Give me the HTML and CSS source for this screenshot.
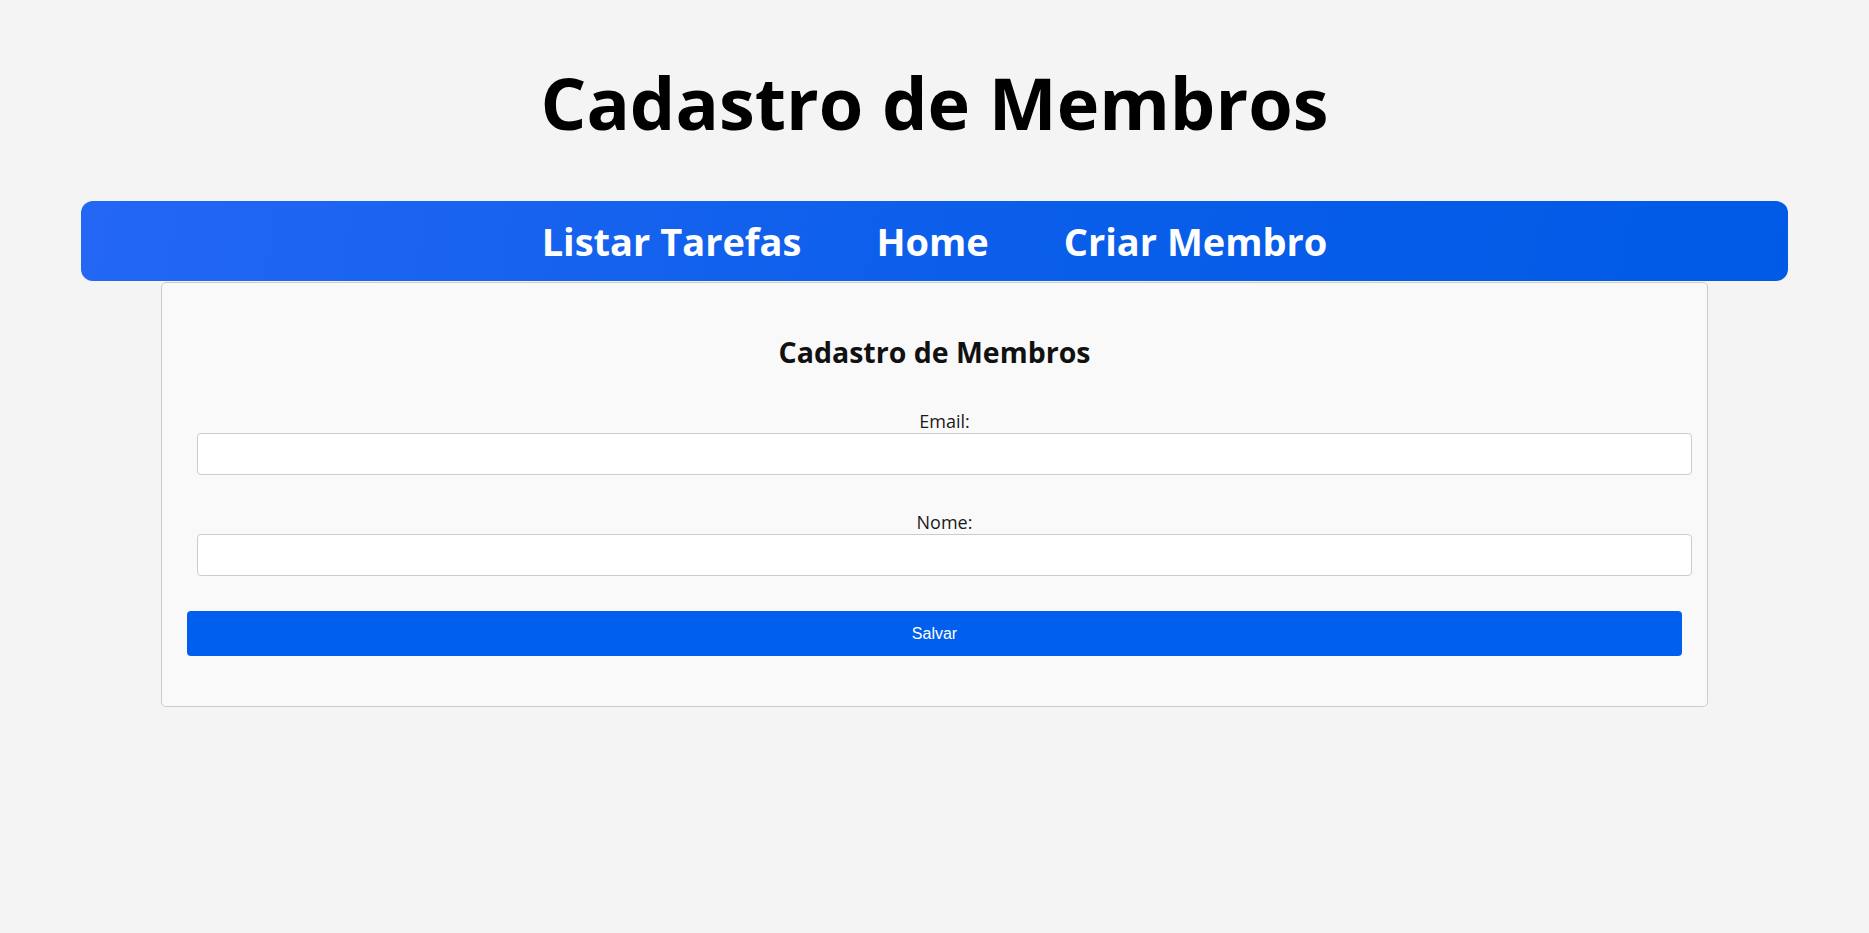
FILE: index.html
```html
<!DOCTYPE html>
<html lang="pt-BR">
<head>
<meta charset="utf-8">
<title>Cadastro de Membros</title>
<link rel="stylesheet" href="styles.css">
</head>
<body>
  <h1 class="page-title">Cadastro de Membros</h1>
  <nav class="navbar">
    <a class="nav-link" href="#">Listar Tarefas</a>
    <a class="nav-link" href="#">Home</a>
    <a class="nav-link" href="#">Criar Membro</a>
  </nav>
  <div class="card">
    <h2 class="card-title">Cadastro de Membros</h2>
    <form class="member-form">
      <div class="form-group">
        <label class="form-label" for="email">Email:</label>
        <input class="form-input" type="email" id="email">
      </div>
      <div class="form-group">
        <label class="form-label" for="nome">Nome:</label>
        <input class="form-input" type="text" id="nome">
      </div>
      <button class="submit-btn" type="button">Salvar</button>
    </form>
  </div>
</body>
</html>
```

FILE: styles.css
```css
* {
  box-sizing: border-box;
}

body {
  margin: 0;
  background: #f4f4f4;
  font-family: "Open Sans", "Noto Sans", sans-serif;
  color: #000;
}

.page-title {
  margin: 54px 0 51px;
  font-size: 72px;
  line-height: 96px;
  font-weight: 700;
  text-align: center;
  color: #000;
}

.navbar {
  margin: 0 81px;
  height: 80px;
  border-radius: 12px;
  background: linear-gradient(100deg, #2367f4 0%, #0a5eea 55%, #005ae5 100%);
  display: flex;
  align-items: center;
  justify-content: center;
  gap: 75px;
}

.nav-link {
  color: #fff;
  text-decoration: none;
  font-size: 38px;
  font-weight: 700;
  line-height: 50px;
}

.card {
  box-sizing: content-box;
  width: 80%;
  margin: 1px auto 0;
  padding: 25px 25px 26px;
  background: #f9f9f9;
  border: 1px solid #cccccc;
  border-radius: 5px;
}

.card-title {
  margin: 24px 0 37px;
  font-size: 28.5px;
  line-height: 40px;
  font-weight: 700;
  text-align: center;
  color: #111;
}

.member-form {
  display: block;
}

.form-group {
  width: 100%;
  margin: 10px 10px 35px;
  text-align: center;
}

.form-label {
  display: block;
  font-size: 18px;
  line-height: 24px;
  color: #1a1a1a;
}

.form-input {
  display: block;
  width: 100%;
  height: 42px;
  padding: 10px;
  border: 1px solid #cccccc;
  border-radius: 4px;
  background: #fff;
  font-size: 16px;
}

.submit-btn {
  display: block;
  width: 100%;
  height: 45px;
  margin: 0 0 24px;
  border: none;
  border-radius: 4px;
  background: #005fec;
  color: #fff;
  font-family: "Liberation Sans", Arial, sans-serif;
  font-size: 16px;
}
```
